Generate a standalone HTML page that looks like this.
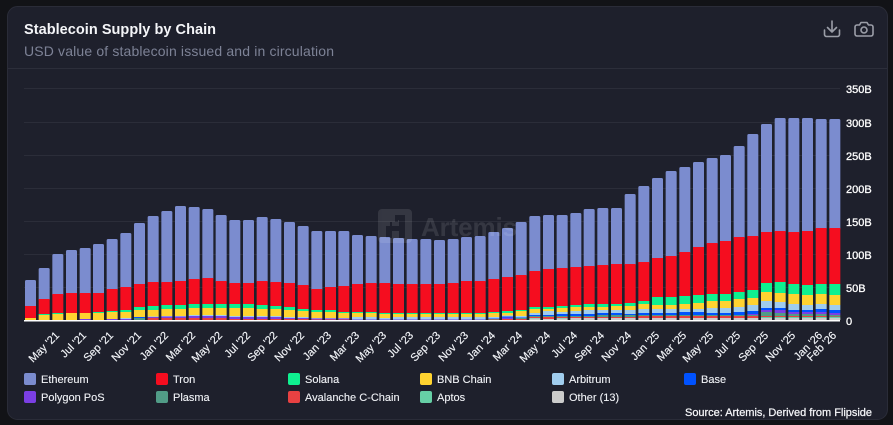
<!DOCTYPE html>
<html>
<head>
<meta charset="utf-8">
<style>
html,body{margin:0;padding:0;background:#121317;width:893px;height:425px;overflow:hidden}
svg{position:absolute;left:0;top:0;display:block}
text{font-family:"Liberation Sans",Arial,sans-serif}
.x{font-size:11px;fill:#f2f4f8;text-anchor:end;stroke:#f2f4f8;stroke-width:.15px}
.y{font-size:11px;fill:#fff;stroke:#fff;stroke-width:.3px}
.l{font-size:11px;fill:#f0f2f6;stroke:#f0f2f6;stroke-width:.12px}
</style>
</head>
<body>
<svg width="893" height="425" viewBox="0 0 893 425" xmlns="http://www.w3.org/2000/svg">
<rect x="7.5" y="6.5" width="880" height="413" rx="10" fill="#1e202c" stroke="#2a2c38"/>
<text x="24" y="34" font-size="14.5" font-weight="700" fill="#f4f5f8" textLength="192" lengthAdjust="spacing">Stablecoin Supply by Chain</text>
<text x="24" y="56" font-size="14" fill="#7d8296" textLength="310" lengthAdjust="spacing">USD value of stablecoin issued and in circulation</text>
<line x1="8" y1="68.5" x2="887" y2="68.5" stroke="#2c2e3a"/>

<g fill="none" stroke="#9b9ea8" stroke-width="1.6" stroke-linecap="round" stroke-linejoin="round">
<path d="M832 21v11M827.5 27.5l4.5 4.5 4.5-4.5"/>
<path d="M824.5 30v4.5a2 2 0 0 0 2 2h11a2 2 0 0 0 2-2V30"/>
<path d="M857 25h2.500l1.500-2.500h6l1.500 2.500h2.500a2 2 0 0 1 2 2v7a2 2 0 0 1-2 2h-14a2 2 0 0 1-2-2v-7a2 2 0 0 1 2-2z"/>
<circle cx="864" cy="30" r="3"/>
</g>

<g stroke="#2b2d39" stroke-width="1">
<line x1="24" x2="840" y1="88.500" y2="88.500"/>
<line x1="24" x2="840" y1="122.500" y2="122.500"/>
<line x1="24" x2="840" y1="155.500" y2="155.500"/>
<line x1="24" x2="840" y1="188.500" y2="188.500"/>
<line x1="24" x2="840" y1="221.500" y2="221.500"/>
<line x1="24" x2="840" y1="254.500" y2="254.500"/>
<line x1="24" x2="840" y1="287.500" y2="287.500"/>
</g>

<g id="bars"></g>
<rect x="24" y="320" width="816" height="1.500" fill="#fff"/>

<g opacity="0.1">
<path fill="#fff" fill-rule="evenodd" d="M382 209h26a4 4 0 0 1 4 4v26a4 4 0 0 1-4 4h-26a4 4 0 0 1-4-4v-26a4 4 0 0 1 4-4zM395 215v7h-5v4h-4v12h6v-7h7v7h6v-23zM392 226h7v-6h-1v2h-6z"/>
<text x="421" y="236" font-size="26" font-weight="700" fill="#fff" textLength="96" lengthAdjust="spacing">Artemis</text>
</g>

<g class="ylab">
<text class="y" x="846" y="93">350B</text>
<text class="y" x="846" y="127">300B</text>
<text class="y" x="846" y="160">250B</text>
<text class="y" x="846" y="193">200B</text>
<text class="y" x="846" y="226">150B</text>
<text class="y" x="846" y="259">100B</text>
<text class="y" x="846" y="292">50B</text>
<text class="y" x="846" y="325">0</text>
</g>

<g>
<text class="x" transform="translate(60,336) rotate(-45)">May '21</text>
<text class="x" transform="translate(87,336) rotate(-45)">Jul '21</text>
<text class="x" transform="translate(114,336) rotate(-45)">Sep '21</text>
<text class="x" transform="translate(142,336) rotate(-45)">Nov '21</text>
<text class="x" transform="translate(169,336) rotate(-45)">Jan '22</text>
<text class="x" transform="translate(196,336) rotate(-45)">Mar '22</text>
<text class="x" transform="translate(223,336) rotate(-45)">May '22</text>
<text class="x" transform="translate(251,336) rotate(-45)">Jul '22</text>
<text class="x" transform="translate(278,336) rotate(-45)">Sep '22</text>
<text class="x" transform="translate(305,336) rotate(-45)">Nov '22</text>
<text class="x" transform="translate(332,336) rotate(-45)">Jan '23</text>
<text class="x" transform="translate(360,336) rotate(-45)">Mar '23</text>
<text class="x" transform="translate(387,336) rotate(-45)">May '23</text>
<text class="x" transform="translate(414,336) rotate(-45)">Jul '23</text>
<text class="x" transform="translate(441,336) rotate(-45)">Sep '23</text>
<text class="x" transform="translate(469,336) rotate(-45)">Nov '23</text>
<text class="x" transform="translate(496,336) rotate(-45)">Jan '24</text>
<text class="x" transform="translate(523,336) rotate(-45)">Mar '24</text>
<text class="x" transform="translate(551,336) rotate(-45)">May '24</text>
<text class="x" transform="translate(578,336) rotate(-45)">Jul '24</text>
<text class="x" transform="translate(605,336) rotate(-45)">Sep '24</text>
<text class="x" transform="translate(632,336) rotate(-45)">Nov '24</text>
<text class="x" transform="translate(660,336) rotate(-45)">Jan '25</text>
<text class="x" transform="translate(687,336) rotate(-45)">Mar '25</text>
<text class="x" transform="translate(714,336) rotate(-45)">May '25</text>
<text class="x" transform="translate(741,336) rotate(-45)">Jul '25</text>
<text class="x" transform="translate(769,336) rotate(-45)">Sep '25</text>
<text class="x" transform="translate(796,336) rotate(-45)">Nov '25</text>
<text class="x" transform="translate(823,336) rotate(-45)">Jan '26</text>
<text class="x" transform="translate(837,336) rotate(-45)">Feb '26</text>
</g>

<g>
<rect x="24" y="373" width="12" height="12" rx="2" fill="#7b8ccf"/><text class="l" x="41" y="383">Ethereum</text>
<rect x="156" y="373" width="12" height="12" rx="2" fill="#f50d1f"/><text class="l" x="173" y="383">Tron</text>
<rect x="288" y="373" width="12" height="12" rx="2" fill="#0ff090"/><text class="l" x="305" y="383">Solana</text>
<rect x="420" y="373" width="12" height="12" rx="2" fill="#ffd330"/><text class="l" x="437" y="383">BNB Chain</text>
<rect x="552" y="373" width="12" height="12" rx="2" fill="#a0cdee"/><text class="l" x="569" y="383">Arbitrum</text>
<rect x="684" y="373" width="12" height="12" rx="2" fill="#0052ff"/><text class="l" x="701" y="383">Base</text>
<rect x="24" y="391" width="12" height="12" rx="2" fill="#7b3fe4"/><text class="l" x="41" y="401">Polygon PoS</text>
<rect x="156" y="391" width="12" height="12" rx="2" fill="#519c87"/><text class="l" x="173" y="401">Plasma</text>
<rect x="288" y="391" width="12" height="12" rx="2" fill="#e84142"/><text class="l" x="305" y="401">Avalanche C-Chain</text>
<rect x="420" y="391" width="12" height="12" rx="2" fill="#66cfa6"/><text class="l" x="437" y="401">Aptos</text>
<rect x="552" y="391" width="12" height="12" rx="2" fill="#cccccc"/><text class="l" x="569" y="401">Other (13)</text>
</g>
<text x="685" y="416" font-size="11" fill="#f4f5f8" stroke="#f4f5f8" stroke-width=".25" textLength="187" lengthAdjust="spacing">Source: Artemis, Derived from Flipside</text>
</svg>
<script>
var C=["#7b8ccf","#f50d1f","#0ff090","#ffd330","#a0cdee","#0052ff","#7b3fe4","#519c87","#e84142","#66cfa6","#cccccc"];
var D=[[280,306,318,318],[268,299,314,315],[254,294,313,314],[250,293,313,313],[248,293,313,313,319,319,319],[244,293,312,313],[239,289,311,312,319,319,319],[233,287,310,312,318,319,319],[223,284,307,310,317,317,318,318,320],[216,282,306,310,316.5,317,317,318,318],[211,282,305,309,316,316.5,316.5,318,318],[206,281,305,309,316,316.5,316.5,318,318],[207,279,304,308,315,316,316,318,318],[209,278,304,308,315,316,316,318,318],[215,281,304,308,315,316,316,318,318],[220,283,304,308,316,317,317,319,319],[220,283,304,308,316,317,317,319,319],[217,281,305,309,316,317,317,319,319],[219,282,306,309,316,317,317,319,319],[222,283,307,310,317,318,318,319,319],[226,285,309,311,317,318,318,319,319],[231,289,310,312,318,318.5,318.5,319.5,319.5],[231,287,310,312,318,318.5,318.5,319.5,319.5],[231,286,312,313,318,318.5,318.5,319.5,319.5],[235,284,312,313,317,319.5,319.5],[236,283,312,313,317,319.5,319.5],[237,283,313,314,318,319.5,319.5],[238,284,313,314,317,319.5,319.5],[239,284,313,314,317,319.5,319.5],[239,284,313,314,317,319.5,319.5],[240,284,313,314,317,319.5,319.5],[239,283,313,314,317,319.5,319.5],[237,281,313,314,317,319.5,319.5],[236,281,313,314,317,319.5,319.5],[232,279,312,313,317,318.5,319,319,319.5],[228,277,311,313,315.5,316.5,317.5,319,319],[222,275,310,311,316,317.5,318,318,319],[216,271,307,309,313,315,316,316,317,318,318.5],[215,269,307,309,311,315,316,316,317,319,319],[215,268,306,308,312,314,316,316,317,318,318.5],[213,267,305,307,311,314,316,316,317,318,318],[209,266,304,307,310,314,316,316,317,318,318],[208,265,304,307,310,313,315,315,317,318,318],[208,264,304,306,310,313,315,315,317,318,318],[194,264,303,306,310,314,315,315,317,318,318],[186,262,301,304,309,313,315,315,316,318,318],[178,258,297,305,309,313,315,315,316,318,318],[171,256,297,305,309,313,315,315,316,318,318],[167,252,296,304,309,312,315,315,316,318,318],[162,247,295,303,309,312,315,315,316,318,318],[158,243,294,301,308,313,315,315,316,318,318],[155,241,294,301,308,313,315,315,316,318,318],[146,237,292,299,307,312,315,315,316,318,318],[134,236,290,298,305,311,314,315,316,318,318],[124,232,283,292,301,308,310,312,316,317,318],[118,231,282,293,302,308,310,313,316,317,318],[118,232,284,294,304,310,312,314,316,317,318],[118,231,285,295,305,310,312,314,316,317,318],[119,228,284,294,304,309,312,314,316,317,318],[119,228,284,295,305,310,313,315,316.5,317,318]];
var h="";
D.forEach(function(r,i){
  var x=Math.round((25+i*13.63)*3)/3,w=11;
  h+='<rect x="'+x+'" y="'+r[0]+'" width="'+w+'" height="'+(r[1]-r[0]+2)+'" rx="1.5" fill="'+C[0]+'"/>';
  for(var k=1;k<r.length;k++){
    var b=k+1<r.length?r[k+1]:320;
    if(b>r[k])h+='<rect x="'+x+'" y="'+r[k]+'" width="'+w+'" height="'+(b-r[k])+'" fill="'+C[k]+'"/>';
  }
});
document.getElementById("bars").innerHTML=h;
</script>
</body>
</html>
